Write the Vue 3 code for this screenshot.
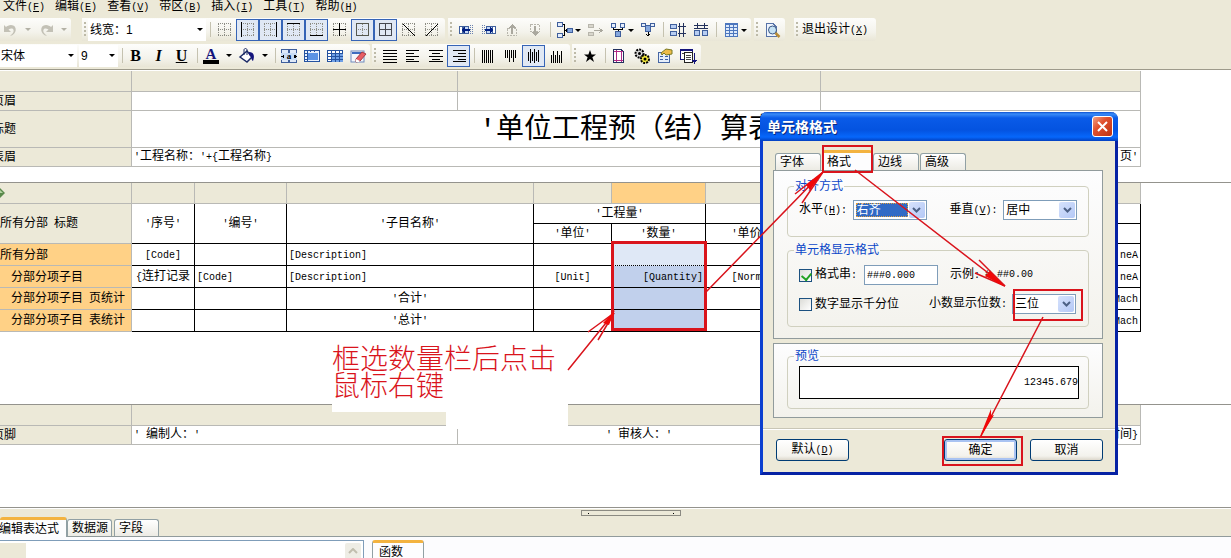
<script setup>
import { h, ref } from 'vue'

// Splits a string so that half-width characters use the narrow fixed-pitch face.
const Txt = (props) =>
  h(
    'span',
    { class: 'txt' },
    (props.t.match(/[\x20-\x7e]+|[^\x20-\x7e]+/g) || []).map((run) =>
      /^[\x20-\x7e]/.test(run) ? h('span', { class: 'lat' }, run) : run
    )
  )
Txt.props = ['t']

const menus = [
  ['文件', 'F'], ['编辑', 'E'], ['查看', 'V'], ['带区', 'B'],
  ['插入', 'I'], ['工具', 'T'], ['帮助', 'H'],
]

const path = (d, stroke = '#000', w = 1, extra = '') =>
  `<path d="${d}" fill="none" stroke="${stroke}" stroke-width="${w}" ${extra}/>`
const fill = (d, color = '#000', extra = '') => `<path d="${d}" fill="${color}" ${extra}/>`
const dots = path('M1.5 2V14M13.5 2V14M7.5 2V14M1 1.5H14M1 7.5H14M1 13.5H14', '#8c8c84', 1, 'stroke-dasharray="1 1"')
const cells = (list, color = '#9db9e8') =>
  list.map(([x, y, w, hh]) => `<rect x="${x + 0.5}" y="${y + 0.5}" width="${w - 1}" height="${hh - 1}" fill="${color}" stroke="#3f5f9c"/>`).join('')
const lines = (rows) => rows.map(([x, y, w]) => `<rect x="${x}" y="${y}" width="${w}" height="1"/>`).join('')
const bars = (cols) => cols.map(([x, y, l]) => `<rect x="${x}" y="${y}" width="1" height="${l}"/>`).join('')

const icons = {
  undo: fill('M1 3v7h7L5.500 7.500C9 5 12 7 10 11l-3 3c7-1 8-11 1-11-2 0-4 1-5 2z', '#c3c1b6', 'shape-rendering="auto"'),
  redo: fill('M15 3v7H8l2.500-2.500C7 5 4 7 6 11l3 3C2 13 1 3 8 3c2 0 4 1 5 2z', '#c3c1b6', 'shape-rendering="auto"'),
  none: dots,
  left: dots + path('M1.500 0V15', '#000', 1.5),
  right: dots + path('M13.500 0V15', '#000', 1.5),
  top: dots + path('M1 1.500H14', '#000', 1.5),
  bottom: dots + path('M1 13.500H14', '#000', 1.5),
  inner: dots + path('M7.500 1V14M1 7.500H14'),
  outer: dots + path('M1.500 1.500H13.500V13.500H1.500Z', '#55584f'),
  all: path('M1.500 1.500H13.500V13.500H1.500ZM7.500 1V14M1 7.500H14', '#45484f'),
  diagA: dots + path('M2 2L14 14'),
  diagB: dots + path('M14 2L2 14'),
  colL: cells([[1, 4, 4, 8]], '#fff') + cells([[5, 4, 6, 8]], '#c6d8f5') + fill('M3 8l4-3v2h5v2H7v2z', '#001f82') + path('M12.500 3V13M14.500 3V13', '#6880b0', 1, 'stroke-dasharray="1 1"'),
  colR: cells([[11, 4, 4, 8]], '#fff') + cells([[5, 4, 7, 8]], '#c6d8f5') + fill('M13 8L9 5v2H4v2h5v2z', '#001f82') + path('M1.500 3V13M3.500 3V13', '#6880b0', 1, 'stroke-dasharray="1 1"'),
  rowU: path('M3.500 6.500H12.500V13.500H3.500Z', '#b8b6ac', 1, 'stroke-dasharray="2 1"') + fill('M8 2l4 4H9v6H7V6H4z', '#aaa89e'),
  rowD: path('M3.500 2.500H12.500V9.500H3.500Z', '#b8b6ac', 1, 'stroke-dasharray="2 1"') + fill('M8 14l4-4H9V4H7v6H4z', '#aaa89e'),
  mergeR: cells([[0, 0, 6, 5], [0, 11, 6, 5]], '#e4edfb') + cells([[10, 6, 6, 5]], '#86a8de') + path('M6 2.500H7.500V13.500H6M7 8.500H9') + fill('M7 8.500l3-2v4z'),
  mergeG: cells([[1, 2, 6, 4], [1, 10, 6, 4]], '#d8d6cc').replaceAll('#3f5f9c', '#b8b6ac') + path('M7 8.500H15M12 6l3 2.500L12 11', '#aaa89e'),
  splitV: cells([[1, 1, 5, 5], [10, 1, 5, 5]], '#e4edfb') + cells([[5, 9, 6, 6]], '#86a8de') + path('M3.500 6V7.500H12.500V6M8 7V9'),
  joinV: cells([[1, 1, 5, 4], [10, 1, 5, 4]], '#e4edfb') + cells([[5, 3, 6, 7]], '#86a8de') + path('M8 10V14M6 12l2 2 2-2'),
  spaceH: cells([[0, 2, 7, 5], [0, 9, 7, 5]], '#b7cdf2') + path('M9.500 1V15M13.500 1V15M8 4.500H16M8 11.500H16', '#23315c'),
  spaceV: cells([[1, 8, 6, 6], [9, 8, 6, 6]], '#b7cdf2') + path('M1 3.500H15M1 6.500H15M4.500 1V7M11.500 1V7', '#23315c'),
  grid: `<rect x="2" y="1" width="13" height="14" fill="#4c76bd"/>` + path('M3 3.500H14M3 6.500H14M3 9.500H14M3 12.500H14', '#dce9fb', 2) + path('M6.500 2V14M10.500 2V14', '#4c76bd'),
  preview: `<path d="M2.500 1.500H9L12.500 5V14.500H2.500Z" fill="#eef4fd" stroke="#5873a8"/><g shape-rendering="auto"><circle cx="8.500" cy="8" r="4" fill="#c5e2f4" stroke="#3c5784"/><path d="M11.500 11l4 4" stroke="#b88c35" stroke-width="2.500"/></g>`,
  unite: cells([[0, 1, 8, 5], [8, 1, 8, 5], [0, 11, 8, 4], [8, 11, 8, 4]], '#dfe9f8') + `<rect x="0" y="5" width="16" height="7" fill="#c7dbf5"/>` + fill('M0 8.500l3-2v4zM16 8.500l-3-2v4z') + `<text x="8" y="11" text-anchor="middle" font-size="9" font-weight="bold" font-family="Liberation Serif">a</text>`,
  fit: `<rect x="0.500" y="2.500" width="15" height="11" fill="#eaf2fd" stroke="#2452a0"/><rect x="4" y="5" width="10" height="7" fill="#5b93e4"/>` + path('M3.500 2V14M0 5.500H3M0 8.500H3M0 11.500H3M6.500 2V4M10.500 2V4', '#2452a0'),
  cellgrid: `<rect x="0.500" y="2.500" width="15" height="11" fill="#fff" stroke="#2452a0"/><rect x="4" y="6" width="12" height="8" fill="#6fa0e6"/>` + path('M4.500 2V14M8.500 2V14M12.500 2V14M0 5.500H16M0 8.500H16M0 11.500H16', '#2452a0'),
  erase: `<g shape-rendering="auto"><rect x="1" y="3" width="13" height="11" fill="#f4f7fc" stroke="#6f8abd"/><path d="M2 5H13" stroke="#3e6cc0" stroke-width="2"/><path d="M6 11l6-7 4 2-6 7-4 1z" fill="#e85e66" stroke="#a53a44"/><path d="M6 11l4 2-1 1H6z" fill="#fff"/></g>`,
  font: `<text x="8" y="11" text-anchor="middle" font-size="15" font-weight="bold" fill="#14147c" font-family="Liberation Serif">A</text><rect x="0" y="12" width="16" height="4" fill="#000"/>`,
  bucket: `<g shape-rendering="auto"><path d="M1 9l7-6 5 6-5 5z" fill="#fff" stroke="#1b2a66" stroke-width="1.500"/><path d="M5 7V2c0-2 3-2 3 0v5" fill="none" stroke="#1b2a66"/><path d="M10 4c5 0 6 4 4 9-2-1-1-4-4-6z" fill="#14147c"/></g>`,
  just: lines([[1, 2, 14], [1, 5, 14], [1, 8, 14], [1, 11, 14], [1, 14, 14]]),
  al: lines([[1, 2, 13], [1, 5, 8], [1, 8, 13], [1, 11, 8], [1, 13, 13]]),
  ac: lines([[1, 2, 14], [4, 5, 8], [1, 8, 14], [4, 11, 8], [1, 13, 14]]),
  ar: lines([[2, 2, 13], [7, 5, 8], [2, 8, 13], [7, 11, 8], [2, 13, 13]]),
  vj: bars([[2, 2, 13], [4, 2, 13], [6, 2, 13], [8, 2, 13], [10, 2, 13], [12, 2, 13]]),
  vt: bars([[2, 2, 8], [4, 2, 8], [6, 2, 12], [8, 2, 8], [10, 2, 12], [12, 2, 8]]),
  vc: bars([[2, 4, 9], [4, 1, 14], [6, 4, 9], [8, 1, 14], [10, 4, 9], [12, 2, 12]]),
  vb: bars([[2, 7, 8], [4, 3, 12], [6, 7, 8], [8, 3, 12], [10, 7, 8], [12, 3, 12]]),
  star: fill('M8 2l1.600 4.400H14l-3.600 2.800L12 14 8 11l-4 3 1.600-4.800L2 6.400h4.400z', '#000', 'shape-rendering="auto"'),
  page: `<path d="M2.500 1.500H10L12.500 4V14.500H2.500Z" fill="#fff" stroke="#22315e"/>` + path('M5.500 2V14M10.500 3V14M3 3.500H12M3 12.500H12', '#b02a86'),
  gears: `<g shape-rendering="auto"><circle cx="5.500" cy="5.500" r="4" fill="#d9d9d9" stroke="#000" stroke-width="2" stroke-dasharray="2 1"/><circle cx="5.500" cy="5.500" r="1.500"/><circle cx="11" cy="11" r="4" fill="#f5ea3c" stroke="#000" stroke-width="2" stroke-dasharray="2 1"/><circle cx="11" cy="11" r="1.500"/></g>`,
  props: `<rect x="1.500" y="4.500" width="11" height="10" fill="#e5eefb" stroke="#4666a4"/>` + path('M3 8.500H6M8 8.500H11M3 11.500H6M8 11.500H11', '#3d5fa4') + `<path d="M4 5l5-4 6 1v4l-6 1-2-2-2 2z" fill="#edbc4a" stroke="#7b7a25" shape-rendering="auto"/>`,
  sort: `<rect x="0.500" y="1.500" width="12" height="10" fill="#fff" stroke="#14147c"/><rect x="0" y="1" width="13" height="2" fill="#14147c"/><rect x="4.500" y="4.500" width="8" height="10" fill="#fff" stroke="#222"/>` + path('M2 5.500H4M6 7.500H11M6 9.500H11M6 11.500H11', '#444') + path('M14.500 5V14', '#14147c') + fill('M12 12h5l-2.500 4z', '#14147c'),
}

const btn = (icon, label, opt = {}) => ({ type: 'btn', icon, label, ...opt })
const sep = { type: 'sep' }
const bandBorders = [
  sep,
  btn('none', '无边线'), btn('left', '左边线', { on: true }), btn('right', '右边线', { on: true }),
  btn('top', '上边线', { on: true }), btn('bottom', '下边线', { on: true }), btn('inner', '内部边线'),
  btn('outer', '外边线', { on: true }), btn('all', '所有边线', { on: true }), btn('diagA', '左斜线'), btn('diagB', '右斜线'),
]
const bandCells = [
  btn('colL', '左插入列'), btn('colR', '右插入列'), btn('rowU', '上插入行'), btn('rowD', '下插入行'), sep,
  btn('mergeR', '合并行', { drop: true }), btn('mergeG', '拆分行'), btn('splitV', '拆分列', { drop: true }), btn('joinV', '合并列'), sep,
  btn('spaceH', '等行高'), btn('spaceV', '等列宽'), sep, btn('grid', '表格', { drop: true }),
]
const bandFormat = [
  btn('font', '字体颜色', { wide: true }), btn('bucket', '填充颜色', { wide: true }), sep,
  btn('unite', '合并单元格'), btn('fit', '适应宽度'), btn('cellgrid', '表格线'), btn('erase', '清除'),
]
const bandAlign = [
  btn('just', '两端对齐'), btn('al', '左对齐'), btn('ac', '水平居中'), btn('ar', '右对齐', { on: true }), sep,
  btn('vj', '垂直分散'), btn('vt', '顶端对齐'), btn('vc', '垂直居中', { on: true }), btn('vb', '底端对齐'),
]
const bandMisc = [
  btn('star', '标记'), sep, btn('page', '页面设置'), btn('gears', '选项'), btn('props', '属性'), btn('sort', '排序'),
]
const topBands = [{ items: bandCells }, { items: [btn('preview', '预览')] }]
const lowBands = [{ items: bandAlign }, { items: bandMisc }]

const rows = [
  { label: '所有分部', sub: false, no: '[Code]', code: '', name: '[Description]', unit: '', qty: '', norm: '', end: 'neA' },
  { label: '分部分项子目', sub: true, no: '{连打记录', code: '[Code]', name: '[Description]', unit: '[Unit]', qty: '[Quantity]', norm: '[Norm]', end: 'neA' },
  { label: '分部分项子目 页统计', sub: true, no: '', code: '', name: "'合计'", mid: true, unit: '', qty: '', norm: '', end: 'Mach' },
  { label: '分部分项子目 表统计', sub: true, no: '', code: '', name: "'总计'", mid: true, unit: '', qty: '', norm: '', end: 'Mach' },
]

const dlgTabs = ['字体', '格式', '边线', '高级']
const activeTab = ref('格式')
const useFormat = ref(true)
const thousands = ref(false)
const pattern = ref('###0.000')
</script>

<template>
  <div class="app">
    <header class="chrome">
      <nav class="menu">
        <a v-for="[name, key] in menus" :key="key" href="#">{{ name }}<span class="lat">(<u>{{ key }}</u>)</span></a>
      </nav>

      <div class="bar">
        <div class="band first">
          <button class="tb short" aria-label="撤销"><svg viewBox="0 0 16 16" v-html="icons.undo" /></button>
          <i class="arrow faded" />
          <button class="tb" aria-label="重做"><svg viewBox="0 0 16 16" v-html="icons.redo" /></button>
          <i class="arrow faded" />
        </div>
        <div class="band lines">
          <i class="grip" />
          <label class="pick width"><select aria-label="线宽"><option>线宽：1</option></select><i class="arrow" /></label>
          <template v-for="(it, i) in bandBorders" :key="i">
            <i v-if="it.type === 'sep'" class="sep" />
            <button v-else class="tb" :class="{ on: it.on }" :aria-label="it.label"><svg viewBox="0 0 16 16" v-html="icons[it.icon]" /></button>
          </template>
        </div>
        <div v-for="(band, b) in topBands" :key="b" class="band">
          <i class="grip" />
          <template v-for="(it, i) in band.items" :key="i">
            <i v-if="it.type === 'sep'" class="sep" />
            <button v-else class="tb" :class="{ drop: it.drop }" :aria-label="it.label"><svg viewBox="0 0 16 16" v-html="icons[it.icon]" /><i v-if="it.drop" class="tri" /></button>
          </template>
        </div>
        <div class="band leave">
          <i class="grip" />
          <button class="exit">退出设计<span class="lat">(<u>X</u>)</span></button>
        </div>
      </div>

      <div class="bar second">
        <div class="band first">
          <label class="pick face"><select aria-label="字体"><option>宋体</option></select><i class="arrow" /></label>
          <label class="pick size"><select aria-label="字号"><option>9</option></select><i class="arrow" /></label>
          <i class="sep" />
          <button class="tb glyph"><b>B</b></button>
          <button class="tb glyph"><em>I</em></button>
          <button class="tb glyph"><u>U</u></button>
          <i class="sep" />
          <template v-for="(it, i) in bandFormat" :key="i">
            <i v-if="it.type === 'sep'" class="sep" />
            <template v-else>
              <button class="tb" :aria-label="it.label"><svg viewBox="0 0 16 16" v-html="icons[it.icon]" /></button>
              <i v-if="it.wide" class="arrow" />
            </template>
          </template>
        </div>
        <div v-for="(band, b) in lowBands" :key="b" class="band">
          <i class="grip" />
          <template v-for="(it, i) in band.items" :key="i">
            <i v-if="it.type === 'sep'" class="sep" />
            <button v-else class="tb" :class="{ on: it.on }" :aria-label="it.label"><svg viewBox="0 0 16 16" v-html="icons[it.icon]" /></button>
          </template>
        </div>
      </div>
    </header>

    <main class="canvas">
      <section class="strip head">
        <table class="sheet">
          <colgroup><col class="c-label"><col class="c-a"><col class="c-b"><col></colgroup>
          <tbody>
            <tr class="ruler"><td /><td /><td /><td /></tr>
            <tr class="r19"><th class="cut">页眉</th><td /><td /><td /></tr>
            <tr class="r37"><th class="cut">标题</th><td colspan="3" class="title">'单位工程预（结）算表'</td></tr>
            <tr class="r19"><th class="cut">表眉</th><td colspan="2" class="bare"><Txt t="'工程名称：'+{工程名称}" /></td><td class="end"><Txt t="页'" /></td></tr>
          </tbody>
        </table>
      </section>

      <section class="strip body">
        <table class="sheet main">
          <colgroup><col class="c-label"><col class="c-no"><col class="c-code"><col class="c-name"><col class="c-unit"><col class="c-qty"><col class="c-norm"><col></colgroup>
          <tbody>
            <tr class="ruler">
              <td><svg class="mark" viewBox="0 0 12 12"><path d="M6 0l6 6-6 6-6-6z" fill="#5a8a4c" /><path d="M6 2l4 4H2z" fill="#b4d3a2" /></svg></td>
              <td /><td /><td /><td /><td class="hot" /><td /><td />
            </tr>
            <tr class="r20 data">
              <th rowspan="2"><Txt t="所有分部 标题" /></th>
              <td rowspan="2" class="mid"><Txt t="'序号'" /></td>
              <td rowspan="2" class="mid"><Txt t="'编号'" /></td>
              <td rowspan="2" class="mid"><Txt t="'子目名称'" /></td>
              <td colspan="2" class="mid"><Txt t="'工程量'" /></td>
              <td colspan="2" />
            </tr>
            <tr class="r20 data">
              <td class="mid"><Txt t="'单位'" /></td><td class="mid"><Txt t="'数量'" /></td><td class="mid"><Txt t="'单价'" /></td><td />
            </tr>
            <tr v-for="(r, i) in rows" :key="i" class="r22 data">
              <th class="hot" :class="{ sub: r.sub }"><Txt :t="r.label" /></th>
              <td class="mid"><Txt :t="r.no" /></td>
              <td><Txt :t="r.code" /></td>
              <td :class="{ mid: r.mid }"><Txt :t="r.name" /></td>
              <td class="mid"><Txt :t="r.unit" /></td>
              <td class="end" :class="i ? 'picked' : 'lead'"><Txt :t="r.qty" /></td>
              <td class="mid"><Txt :t="r.norm" /></td>
              <td class="end"><Txt :t="r.end" /></td>
            </tr>
          </tbody>
        </table>
      </section>

      <section class="strip foot">
        <table class="sheet">
          <colgroup><col class="c-label"><col class="c-a"><col class="c-b"><col></colgroup>
          <tbody>
            <tr class="ruler"><td /><td /><td /><td /></tr>
            <tr class="r19"><th class="cut">页脚</th><td><Txt t="' 编制人：'" /></td><td class="mid"><Txt t="' 审核人：'" /></td><td class="end"><Txt t="时间}" /></td></tr>
          </tbody>
        </table>
      </section>
    </main>

    <div class="splitter"><span class="handle"><i /><i /></span></div>
    <nav class="tabs low">
      <button class="tab active">编辑表达式</button>
      <button class="tab">数据源</button>
      <button class="tab">字段</button>
    </nav>
    <footer class="bottom">
      <div class="editor">
        <span class="gutter" />
        <textarea aria-label="表达式" />
        <button class="up" aria-label="向上滚动"><svg viewBox="0 0 10 6"><path d="M1 5l4-4 4 4" fill="none" stroke="#c1beae" stroke-width="2" /></svg></button>
      </div>
      <button class="tab active fn">函数</button>
    </footer>

    <div class="patch" />
    <p class="note">框选数量栏后点击<br>鼠标右键</p>

    <div class="dialog" role="dialog" aria-label="单元格格式">
      <div class="caption">
        <strong>单元格格式</strong>
        <button class="close" aria-label="关闭"><svg viewBox="0 0 13 13"><path d="M2 2l9 9M11 2l-9 9" stroke="#fff" stroke-width="2" /></svg></button>
      </div>
      <div class="inner">
        <nav class="tabs">
          <button v-for="t in dlgTabs" :key="t" class="tab" :class="{ active: t === activeTab }" @click="activeTab = t">{{ t }}</button>
        </nav>
        <div class="panel">
          <fieldset class="align">
            <legend>对齐方式</legend>
            <div class="line">
              <label for="hz" class="lab">水平<span class="lat">(<u>H</u>):</span></label>
              <span class="combo focus"><select id="hz"><option>右齐</option></select><i class="chev"><svg viewBox="0 0 9 7"><path d="M1 1l3.500 3.500L8 1" /></svg></i></span>
              <label for="vt" class="lab gap">垂直<span class="lat">(<u>V</u>):</span></label>
              <span class="combo"><select id="vt"><option>居中</option></select><i class="chev"><svg viewBox="0 0 9 7"><path d="M1 1l3.500 3.500L8 1" /></svg></i></span>
            </div>
          </fieldset>
          <fieldset class="format">
            <legend>单元格显示格式</legend>
            <div class="line">
              <label class="tick"><input v-model="useFormat" type="checkbox"><Txt t="格式串:" /></label>
              <input v-model="pattern" class="field" type="text" aria-label="格式串">
              <span class="sample"><Txt t="示例:" /></span><span class="lat">#,##0.00</span>
            </div>
            <div class="line">
              <label class="tick"><input v-model="thousands" type="checkbox"><span>数字显示千分位</span></label>
              <label for="dp" class="places"><Txt t="小数显示位数:" /></label>
              <span class="combo small"><select id="dp"><option>三位</option></select><i class="chev"><svg viewBox="0 0 9 7"><path d="M1 1l3.500 3.500L8 1" /></svg></i></span>
            </div>
          </fieldset>
        </div>
        <div class="panel view">
          <fieldset>
            <legend>预览</legend>
            <output class="lat">12345.679</output>
          </fieldset>
        </div>
      </div>
      <div class="actions">
        <button class="push">默认<span class="lat">(<u>D</u>)</span></button>
        <button class="push ok">确定</button>
        <button class="push">取消</button>
      </div>
    </div>

    <svg class="marks" width="1231" height="558" viewBox="0 0 1231 558" aria-hidden="true">
      <g fill="none" stroke="#d9141c" stroke-width="2">
        <path stroke-width="3" d="M612.500 242.500H705.500V329.500H612.500Z" />
        <path d="M823 146H872V172H823ZM1014 290H1082V320H1014ZM943 437H1022V465H943Z" />
        <path stroke-width="1.500" d="M706 292L823 172M855 170L1005 286M1043 317L981 436M568 370L614 313" />
        <path stroke-width="1.500" d="M795 194L823 172L802 203M975 273L1005 286L979 260M588 332L614 313L598 340" />
      </g>
      <path fill="#f00808" d="M979 439L991 409V416L994 415L983 433ZM1005 287L985 276L990 271ZM823 172L806 185L810 190ZM615 310L603 323L609 325Z" />
    </svg>
  </div>
</template>

<style>
html,
body {
  overflow: hidden;
}
.lat {
  font-family: "Liberation Mono", monospace;
  font-size: 10px;
}
.txt {
  white-space: pre;
}
</style>

<style scoped>
.app {
  position: relative;
  display: flex;
  flex-direction: column;
  height: 100vh;
  overflow: hidden;
  background: #ece9d8;
  color: #000;
  font: 12px/14px "Liberation Sans", "Noto Sans CJK SC", sans-serif;
}
.app * {
  box-sizing: border-box;
}
button,
select,
input,
textarea {
  margin: 0;
  padding: 0;
  border: 0;
  background: none;
  color: inherit;
  font: inherit;
}
svg {
  display: block;
}

/* Menu and tool bars */
.chrome {
  flex: none;
  border-bottom: 1px solid #9d9a8b;
}
.menu {
  display: flex;
  gap: 10px;
  height: 18px;
  padding: 0 3px 5px;
  align-items: center;
}
.menu a {
  color: inherit;
  text-decoration: none;
  white-space: nowrap;
}
.bar {
  display: flex;
  gap: 3px;
  height: 23px;
}
.bar.second {
  gap: 2px;
  margin: 3px 0 2px;
}
.band {
  display: flex;
  align-items: center;
  height: 23px;
  padding-right: 2px;
  border-radius: 0 3px 3px 0;
  background: linear-gradient(#fdfdfb, #f4f3ec 60%, #e9e6d6);
}
.band.first {
  padding-right: 1px;
}
.lines {
  margin-left: 8px;
}
.leave {
  margin-left: 6px;
  padding-right: 8px;
}
.grip {
  width: 5px;
  height: 15px;
  margin-right: 1px;
  background: repeating-linear-gradient(#bdbaa8 0 2px, transparent 2px 4px) 2px 0 / 2px 100% no-repeat;
}
.sep {
  width: 7px;
  height: 15px;
  background: linear-gradient(#c5c2b0, #c5c2b0) 4px 0 / 1px 100% no-repeat;
}
.second .sep {
  width: 6px;
}
.tb {
  position: relative;
  display: flex;
  flex: none;
  align-items: center;
  justify-content: center;
  width: 23px;
  height: 22px;
}
.tb svg {
  width: 16px;
  height: 16px;
  overflow: visible;
  shape-rendering: crispEdges;
}
.tb.short {
  width: 21px;
}
.tb.on {
  border: 1px solid #3664b6;
  background: #e0e8f4;
}
.tb.drop {
  width: 30px;
  padding-right: 7px;
}
.tri {
  position: absolute;
  right: 2px;
  top: 10px;
  border: 3px solid transparent;
  border-top-color: #000;
}
.glyph {
  font: 16px/20px "Liberation Serif", serif;
  font-weight: bold;
}
.arrow {
  display: flex;
  flex: none;
  justify-content: center;
  width: 13px;
}
.arrow::before {
  content: "";
  margin-top: 3px;
  border: 3px solid transparent;
  border-top-color: #000;
}
.faded::before {
  border-top-color: #b3b1a5;
}
.pick {
  display: flex;
  align-items: center;
  height: 22px;
  background: #fff;
}
.pick select {
  flex: 1;
  min-width: 0;
  appearance: none;
  outline: 0;
}
.pick.width {
  width: 118px;
  padding-left: 2px;
}
.pick.face {
  width: 77px;
  padding-left: 1px;
  margin-right: 2px;
}
.pick.size {
  width: 39px;
  padding-left: 2px;
}
.exit {
  padding-left: 2px;
  white-space: nowrap;
}

/* Report bands */
.canvas {
  flex: none;
  border-top: 1px solid #fff;
  background: #fff;
}
.strip {
  background: #fff;
}
.strip.body,
.strip.foot {
  border-top: 1px solid #94938d;
}
.head {
  padding-bottom: 15px;
}
.body {
  padding-bottom: 72px;
}
.foot {
  padding-bottom: 62px;
}
.sheet {
  width: calc(100% - 90px);
  table-layout: fixed;
  border-collapse: separate;
  border-spacing: 0;
}
.c-label { width: 132px; }
.c-a { width: 326px; }
.c-b { width: 363px; }
.c-no { width: 63px; }
.c-code { width: 92px; }
.c-name { width: 247px; }
.c-unit { width: 78px; }
.c-qty { width: 94px; }
.c-norm { width: 88px; }
.sheet td,
.sheet th {
  padding: 0 2px;
  overflow: hidden;
  border: solid #b9b9b5;
  border-width: 0 1px 1px 0;
  font-weight: normal;
  text-align: left;
  white-space: nowrap;
}
.sheet th {
  padding-left: 0;
  background: #ece9d8;
}
.sheet th.cut {
  text-indent: -8px;
}
.sheet th.sub {
  padding-left: 11px;
}
.ruler td {
  height: 21px;
  background: #ece9d8;
}
.r19 td { height: 19px; }
.r20 td { height: 20px; }
.r22 td { height: 22px; }
.r37 td { height: 37px; }
.sheet .data td {
  border-color: #000;
}
.sheet .hot {
  background: #ffd186;
}
.sheet .mid {
  text-align: center;
}
.sheet .end {
  text-align: right;
}
.sheet .bare {
  border-right: 0;
}
.sheet .title {
  padding-top: 4px;
  font-size: 28px;
  line-height: 32px;
  text-align: center;
  font-family: "Liberation Mono", "Noto Sans CJK SC", monospace;
}
.sheet .lead {
  border-bottom-style: dotted;
  background: #dfe8f6;
}
.sheet .picked {
  border-bottom-color: #c1d0ec;
  background: #c1d0ec;
}
.mark {
  width: 12px;
  height: 12px;
  margin-left: -9px;
}

/* Lower pane */
.splitter {
  flex: none;
  display: flex;
  justify-content: center;
  height: 10px;
  padding: 2px 0 0 30px;
  border-top: 1px solid #94938d;
  box-shadow: inset 0 1px #fff;
}
.handle {
  display: flex;
  justify-content: space-between;
  align-items: center;
  width: 100px;
  height: 6px;
  padding: 0 6px;
  border: 1px solid #8b8a82;
}
.handle i {
  width: 1px;
  height: 1px;
  background: #000;
}
.tabs {
  display: flex;
  flex: none;
  align-items: flex-end;
}
.tab {
  height: 17px;
  padding: 0 4px;
  border: 1px solid #91a0a4;
  border-bottom: 0;
  border-radius: 3px 3px 0 0;
  background: linear-gradient(#fff, #ecebe4);
  text-align: left;
  white-space: nowrap;
}
.tab.active {
  height: 20px;
  border-top: 3px solid #f3b340;
  background: #fdfdfe;
}
.tabs.low {
  gap: 2px;
  height: 20px;
  border-bottom: 1px solid #919b9c;
}
.low .tab {
  width: 45px;
}
.low .tab.active {
  width: 67px;
  margin: 0 -2px -1px 0;
  padding: 0;
  border-left: 0;
  text-indent: -1px;
}
.bottom {
  display: flex;
  flex: 1;
  min-height: 0;
  gap: 8px;
  padding-top: 3px;
  background: #fcfcfe;
}
.editor {
  display: flex;
  flex: none;
  width: 364px;
  padding: 2px 2px 0 0;
  border: 1px solid #7f9db9;
  border-width: 1px 1px 0 0;
  background: #fff;
}
.gutter {
  width: 26px;
  background: #ece9d8;
}
.editor textarea {
  flex: 1;
  min-width: 0;
  resize: none;
  outline: 0;
}
.up {
  display: flex;
  justify-content: center;
  width: 16px;
  height: 17px;
  padding-top: 5px;
  border-radius: 2px;
  background: #eeede5;
}
.up svg {
  width: 10px;
  height: 6px;
}
.fn {
  width: 52px;
  padding-left: 6px;
}

/* Remarks laid over the report */
.note {
  position: absolute;
  left: 332px;
  top: 346px;
  margin: 0;
  width: 236px;
  height: 66px;
  background: #fff;
  color: #d9141c;
  font-size: 28px;
  line-height: 27px;
  font-weight: 300;
  white-space: nowrap;
}
.patch {
  position: absolute;
  left: 446px;
  top: 404px;
  width: 122px;
  height: 25px;
  background: #fff;
}
.marks {
  position: absolute;
  left: 0;
  top: 0;
  pointer-events: none;
}

/* Dialog */
.dialog {
  position: absolute;
  left: 760px;
  top: 112px;
  width: 358px;
  border: 3px solid #0b3fd0;
  border-top: 0;
  border-radius: 7px 7px 0 0;
  border-right-color: #0622a4;
  border-bottom-color: #0622a4;
  background: #ece9d8;
}
.caption {
  display: flex;
  align-items: center;
  justify-content: space-between;
  height: 29px;
  margin: 0 -3px;
  padding: 0 5px 0 7px;
  border-radius: 7px 7px 0 0;
  background: linear-gradient(#0a4fd0, #3a8cf8 2px, #0a5be8 6px, #0453e0 18px, #0667fb 25px, #0340c0);
  color: #fff;
  font-size: 14px;
  text-shadow: 1px 1px #0a2a80;
}
.close {
  display: flex;
  align-items: center;
  justify-content: center;
  width: 21px;
  height: 21px;
  border: 1px solid #fff;
  border-radius: 3px;
  background: linear-gradient(135deg, #f0a184, #e0502e 40%, #bd3312);
}
.close svg {
  width: 13px;
  height: 13px;
}
.inner {
  padding: 9px 12px 10px 10px;
}
.inner .tabs {
  height: 20px;
  padding-left: 2px;
}
.inner .tab {
  width: 46px;
}
.inner .tab.active {
  width: 50px;
}
.inner .tab + .tab {
  margin-left: 1px;
}
.panel {
  padding: 8px 13px 11px;
  border: 1px solid #919b9c;
  background: linear-gradient(#fdfdfe, #f3f2ec);
}
.panel.view {
  margin-top: 4px;
  padding: 5px 13px 8px;
}
fieldset {
  min-width: 0;
  margin: 0;
  padding: 7px 11px 16px;
  border: 1px solid #d0d0bf;
  border-radius: 4px;
}
legend {
  margin-left: -5px;
  padding: 0 1px;
  color: #0a46c8;
  line-height: 14px;
}
.format {
  display: grid;
  gap: 9px;
  margin-top: 6px;
  padding: 8px 11px 12px;
}
.view fieldset {
  padding: 3px 9px 9px 11px;
}
.line {
  display: flex;
  align-items: center;
  height: 20px;
  white-space: nowrap;
}
.lab {
  width: 54px;
}
.lab.gap {
  margin-left: 23px;
}
.combo {
  display: flex;
  width: 74px;
  height: 20px;
  padding: 1px;
  border: 1px solid #7f9db9;
  background: #fff;
}
.combo.small {
  width: 64px;
  margin-left: auto;
  margin-right: 1px;
}
.combo select {
  flex: 1;
  min-width: 0;
  padding-left: 1px;
  appearance: none;
  outline: 0;
}
.combo.focus select {
  margin: 1px;
  outline: 1px dotted #e0a040;
  outline-offset: -1px;
  background: #316ac5;
  color: #fff;
}
.chev {
  display: flex;
  align-items: center;
  justify-content: center;
  width: 16px;
  border-radius: 2px;
  background: linear-gradient(135deg, #d6e2fc, #b4c8f6);
}
.chev svg {
  width: 9px;
  height: 7px;
  fill: none;
  stroke: #4d6185;
  stroke-width: 2;
}
.tick {
  display: flex;
  align-items: center;
  gap: 3px;
}
.tick input {
  position: relative;
  width: 13px;
  height: 13px;
  appearance: none;
  border: 1px solid #1c5180;
  background: linear-gradient(135deg, #dcdcd7, #fff);
}
.tick input:checked::after {
  content: "";
  position: absolute;
  left: 3px;
  top: 1px;
  width: 5px;
  height: 7px;
  border: solid #21a121;
  border-width: 0 2px 2px 0;
  transform: rotate(40deg);
}
.field {
  width: 74px;
  height: 20px;
  margin: 0 12px 0 7px;
  padding: 0 2px;
  border: 1px solid #7f9db9;
  background: #fff;
  font: 10px/14px "Liberation Mono", monospace;
}
.sample {
  margin-right: 5px;
}
.places {
  margin-left: 30px;
}
output {
  display: flex;
  align-items: center;
  justify-content: flex-end;
  height: 33px;
  border: 1px solid #000;
  background: #fff;
}
.actions {
  display: flex;
  gap: 13px;
  padding: 10px 12px 11px 13px;
  border-top: 1px solid #c9c6b6;
  box-shadow: inset 0 1px #fff;
}
.push {
  width: 73px;
  height: 22px;
  border: 1px solid #003c74;
  border-radius: 3px;
  background: linear-gradient(#fff, #f3f2ec 80%, #dcd7cb);
}
.push.ok {
  margin-left: auto;
  box-shadow: inset 0 0 0 2px #a9c3f2;
}
</style>
